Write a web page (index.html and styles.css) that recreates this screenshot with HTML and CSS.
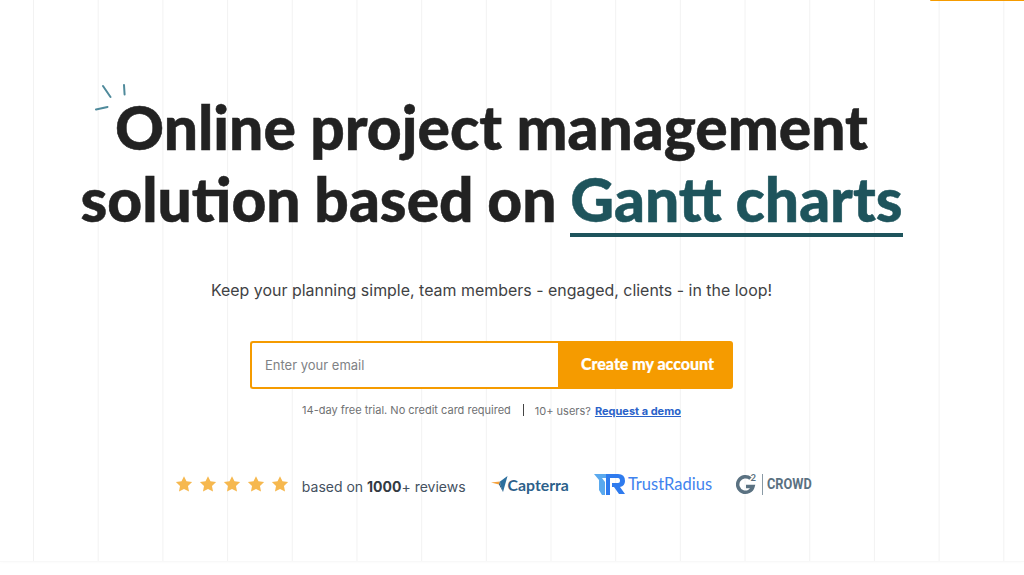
FILE: index.html
```html
<!DOCTYPE html>
<html lang="en">
<head>
<meta charset="utf-8">
<title>Online project management</title>
<link rel="stylesheet" href="styles.css">
</head>
<body>
<div class="top-accent-row"><span class="top-accent"></span></div>
<main class="hero">
  <h1 class="title">
    <span class="title-line first-line">
      <svg class="sparks" width="34" height="30" viewBox="0 0 34 30" aria-hidden="true">
        <path d="M9 2 L16.500 13 M30 1 L30.600 10.500 M2 25.500 L13.500 23" fill="none" stroke="#4f8a9b" stroke-width="2" stroke-linecap="round"/>
      </svg>
      Online project management
    </span>
    <span class="title-line second-line">solution based on <span class="accent">Gantt charts</span></span>
  </h1>
  <p class="subtitle">Keep your planning simple, team members - engaged, clients - in the loop!</p>
  <form class="signup">
    <input class="email" type="text" placeholder="Enter your email">
    <button class="submit" type="button">Create my account</button>
  </form>
  <div class="notes">
    <span class="trial">14-day free trial. No credit card required</span>
    <span class="divider"></span>
    <span class="users">10+ users?</span>
    <a class="demo" href="#">Request a demo</a>
  </div>
  <div class="proof">
    <div class="stars">
      <svg class="star" viewBox="0 0 24 24"><path d="M12 1.500l3.300 6.900 7.500 1-5.500 5.200 1.400 7.500L12 18.500l-6.700 3.600 1.400-7.500L1.200 9.400l7.500-1z"/></svg>
      <svg class="star" viewBox="0 0 24 24"><path d="M12 1.500l3.300 6.900 7.500 1-5.500 5.200 1.400 7.500L12 18.500l-6.700 3.600 1.400-7.500L1.200 9.400l7.500-1z"/></svg>
      <svg class="star" viewBox="0 0 24 24"><path d="M12 1.500l3.300 6.900 7.500 1-5.500 5.200 1.400 7.500L12 18.500l-6.700 3.600 1.400-7.500L1.200 9.400l7.500-1z"/></svg>
      <svg class="star" viewBox="0 0 24 24"><path d="M12 1.500l3.300 6.900 7.500 1-5.500 5.200 1.400 7.500L12 18.500l-6.700 3.600 1.400-7.500L1.200 9.400l7.500-1z"/></svg>
      <svg class="star" viewBox="0 0 24 24"><path d="M12 1.500l3.300 6.900 7.500 1-5.500 5.200 1.400 7.500L12 18.500l-6.700 3.600 1.400-7.500L1.200 9.400l7.500-1z"/></svg>
    </div>
    <span class="reviews">based on <b>1000</b>+ reviews</span>
    <div class="brand capterra">
      <svg width="17" height="16" viewBox="0 0 17 16" aria-hidden="true">
        <path d="M0 6.500 L9 5.500 L8 8.500z" fill="#f6a13a"/>
        <path d="M9 5.500 L16.500 0 L12 16 L9.500 9z" fill="#2d6f9e"/>
        <path d="M8 8.500 L9 5.500 L9.500 9 L12 16z" fill="#1f4e74"/>
      </svg>
      <span>Capterra</span>
    </div>
    <div class="brand trustradius">
      <svg width="31" height="21" viewBox="0 0 31 21" aria-hidden="true">
        <path d="M0 0 H12 V4 H8 L11 8 V21 H8 L5 16 V6z" fill="#5aa9ee"/>
        <path d="M12 0 H24 Q31 0 31 7 Q31 12 26 13 L31 20 H25 L20 13 H18 V9 H24 Q26 9 26 7 Q26 4 24 4 H16 V21 H12z" fill="#2f7bee"/>
      </svg>
      <span>TrustRadius</span>
    </div>
    <div class="brand crowd">
      <svg class="g2-mark" width="22" height="25" viewBox="0 -3 22 25" aria-hidden="true">
        <path d="M14.500 5.500 A7.800 7.800 0 1 0 17 13.500 H10" fill="none" stroke="#5a7181" stroke-width="3.500"/>
        <text class="g2-sup" x="14.500" y="7.500">2</text>
      </svg>
      <span class="crowd-rule"></span>
      <span class="crowd-word">CROWD</span>
    </div>
  </div>
</main>
</body>
</html>
```

FILE: styles.css
```css
* { box-sizing: border-box; }
html, body { margin: 0; padding: 0; background: #fff; }
body { height: 575px; overflow: hidden; font-family: Inter, "Liberation Sans", sans-serif; position: relative; }

.top-accent-row { position: absolute; top: 0; left: 0; right: 0; display: flex; justify-content: flex-end; }
.top-accent { width: 94px; height: 1px; background: #f59b00; border-bottom-left-radius: 2px; }

.hero {
  height: 562px;
  padding: 91px 41px 0 0;
  display: flex;
  flex-direction: column;
  align-items: center;
  border-bottom: 1px solid #f8f8f8;
  box-shadow: 0 1px 3px rgba(0, 0, 0, 0.02);
  background-image: linear-gradient(to right, #f2f2f2 1px, transparent 1px);
  background-size: 64.7px 100%;
  background-position: 33px 0;
}

.title { margin: 0; font-family: Lato, sans-serif; font-weight: 900; font-size: 60.500px; line-height: 72px; color: #222; text-align: center; -webkit-text-stroke: 0.500px currentColor; }
.title-line { display: block; white-space: nowrap; position: relative; }
.first-line { width: max-content; margin: 0 auto; }
.second-line { word-spacing: -0.700px; }
.sparks { position: absolute; left: -21px; top: -7px; }
.accent { color: #1e545c; border-bottom: 4px solid #1e545c; display: inline-block; line-height: 66px; padding-bottom: 1px; }

.subtitle { margin: 42px 0 0; font-size: 15.950px; line-height: 24px; color: #3f4244; }

.signup { margin-top: 38px; display: flex; width: 483px; height: 48px; }
.email { flex: 1; min-width: 0; height: 48px; border: 2px solid #f59b00; border-right: 0; border-radius: 3px 0 0 3px; padding: 0 13px; font: 13px Inter, sans-serif; color: #333; outline: none; background: #fff; }
.email::placeholder { color: #808285; opacity: 1; }
.submit { width: 175px; height: 48px; border: 0; border-radius: 0 3px 3px 0; background: #f59b00; color: #fff; font: 900 16px Lato, sans-serif; padding: 0 0 4px 4px; -webkit-text-stroke: 0.200px currentColor; }

.notes { margin-top: 14px; display: flex; align-items: center; font-size: 11px; color: #6f7173; line-height: 14px; }
.divider { width: 1px; height: 12px; background: #444; margin: 0 11px 0 12px; }
.users { margin-right: 4px; position: relative; top: 1px; }
.demo { color: #2a62c9; font-weight: 700; text-decoration: underline; position: relative; top: 1px; }

.proof { margin-top: 56px; padding-left: 4px; display: flex; align-items: center; }
.stars { display: flex; gap: 6px; }
.star { width: 18px; height: 18px; fill: #f6b84f; display: block; }
.reviews { margin-left: 13px; font-size: 14px; color: #44515f; position: relative; top: 2px; }
.reviews b { color: #333a42; font-weight: 700; }
.brand { display: flex; align-items: center; }
.capterra { margin-left: 25px; font: 700 15.800px Lato, sans-serif; color: #2c5f8a; }
.trustradius { margin-left: 25px; gap: 3px; font: 400 16.500px Lato, sans-serif; color: #3f83ee; }
.crowd { margin-left: 24px; font: 700 14px Roboto, sans-serif; color: #5a7181; }
.g2-mark { margin-top: -3px; }
.crowd-rule { width: 1px; height: 21px; background: #8a9aa5; margin: 0 4px 0 4px; }
.crowd-word { display: inline-block; transform: scaleX(0.91); transform-origin: left center; margin-right: -4px; }
.g2-sup { font: 700 9.500px Lato, sans-serif; fill: #5a7181; }
```
